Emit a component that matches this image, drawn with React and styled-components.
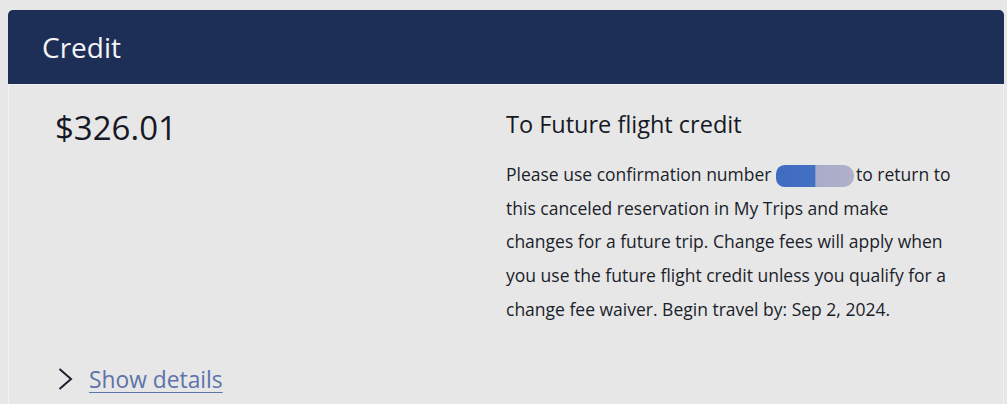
import React from 'react';
import styled, { createGlobalStyle } from 'styled-components';

const GlobalStyle = createGlobalStyle`
  html, body {
    margin: 0;
    padding: 0;
    background: #e7e7e7;
  }
  body {
    font-family: "Open Sans", "Noto Sans", sans-serif;
    color: #171a26;
  }
`;

const Page = styled.div`
  padding: 10px 3px 0 8px;
`;

const Card = styled.section`
  border: 1px solid #f1f1f1;
  border-top: none;
  border-bottom: none;
  border-radius: 5px 5px 0 0;
  background: #e7e7e7;
  min-height: 394px;
  box-sizing: border-box;
`;

const Header = styled.header`
  height: 74px;
  display: flex;
  align-items: center;
  padding: 0 0 0 34px;
  background: #1e2f57;
  border-radius: 5px 5px 0 0;
  border-bottom: 1px solid #f1f1f1;
  margin: 0 -1px;
`;

const Title = styled.h2`
  margin: 0;
  font-size: 28px;
  font-weight: 400;
  color: #f4f4f6;
`;

const Body = styled.div`
  display: grid;
  grid-template-columns: 451px 1fr;
  padding: 19px 38px 0 46px;
`;

const Amount = styled.div`
  font-size: 33px;
  line-height: 48px;
  color: #161925;
`;

const Info = styled.div`
  padding-top: 4px;
`;

const InfoTitle = styled.h3`
  margin: 0 0 18px;
  font-size: 23.5px;
  font-weight: 400;
  line-height: 32px;
  color: #161925;
`;

const InfoText = styled.p`
  margin: 0;
  font-size: 17.5px;
  line-height: 33.7px;
  color: #1b1e2b;
  max-width: 452px;
`;

const Redacted = styled.span`
  display: inline-block;
  width: 78px;
  height: 22px;
  vertical-align: -6px;
  margin: 0 2px 0 0;
  border-radius: 11px 14px 14px 11px;
  background: linear-gradient(90deg, #3e6cc0 0, #4470c2 50%, #aaabc8 51%, #b0b0cb 100%);
`;

const Footer = styled.div`
  display: flex;
  align-items: center;
  gap: 15px;
  padding: 37px 0 0 48px;
`;

const Chevron = styled.svg`
  width: 17px;
  height: 24px;
  flex: none;
`;

const DetailsLink = styled.a`
  font-size: 22.8px;
  color: #5d73a9;
  text-decoration: underline;
  text-decoration-thickness: 1px;
  text-underline-offset: 4px;
  cursor: pointer;
`;

export default function App() {
  return (
    <>
      <GlobalStyle />
      <Page>
        <Card>
          <Header>
            <Title>Credit</Title>
          </Header>
          <Body>
            <Amount>$326.01</Amount>
            <Info>
              <InfoTitle>To Future flight credit</InfoTitle>
              <InfoText>
                Please use confirmation number <Redacted />to return to this canceled
                reservation in My Trips and make changes for a future trip. Change fees
                will apply when you use the future flight credit unless you qualify for a
                change fee waiver. Begin travel by: Sep 2, 2024.
              </InfoText>
            </Info>
          </Body>
          <Footer>
            <Chevron viewBox="0 0 17 24">
              <path d="M2.5 2 L14 12 L2.5 22" fill="none" stroke="#1c1f2c" strokeWidth="2" />
            </Chevron>
            <DetailsLink>Show details</DetailsLink>
          </Footer>
        </Card>
      </Page>
    </>
  );
}
